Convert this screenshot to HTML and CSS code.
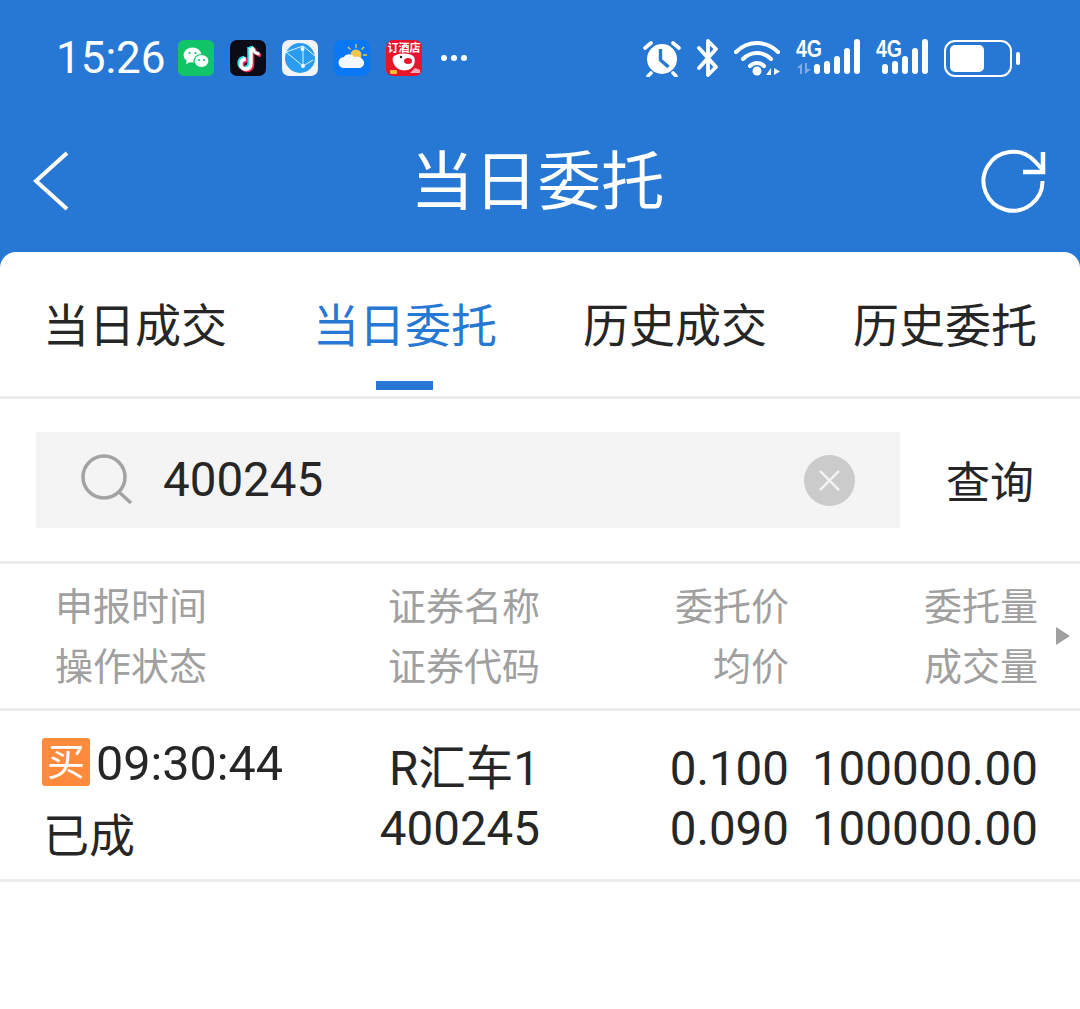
FILE: index.html
```html
<!DOCTYPE html>
<html lang="zh-CN">
<head>
    <meta charset="UTF-8" />
    <meta name="viewport" content="width=device-width, initial-scale=1.0"/>
    <title>当日委托</title>
    <link rel="stylesheet" href="styles.css">
</head>
<body>

    <header class="topbar">
        <div class="statusbar">
            <div class="status-left">
                <span class="clock">15:26</span>
                <div class="app-icons">
                    <svg class="app-icon" viewBox="0 0 36 36">
                        <rect width="36" height="36" rx="6" fill="#12c468"/>
                        <ellipse cx="14.5" cy="15" rx="9" ry="7.5" fill="#fff"/>
                        <path d="M9 20l-1 4 4.500-2z" fill="#fff"/>
                        <ellipse cx="23.500" cy="21" rx="7.500" ry="6.500" fill="#fff" stroke="#12c468" stroke-width="1.200"/>
                        <circle cx="11.500" cy="13" r="1.100" fill="#12c468"/>
                        <circle cx="17.500" cy="13" r="1.100" fill="#12c468"/>
                        <circle cx="21" cy="20" r="1" fill="#12c468"/>
                        <circle cx="26" cy="20" r="1" fill="#12c468"/>
                    </svg>
                    <svg class="app-icon" viewBox="0 0 36 36">
                        <rect width="36" height="36" rx="7" fill="#0b0c17"/>
                        <path d="M19.500 7v16a5 5 0 1 1-5-5" fill="none" stroke="#27e0e6" stroke-width="4.500"/>
                        <path d="M21 6c.5 4 3.500 7 8 7.500" fill="none" stroke="#27e0e6" stroke-width="3.500"/>
                        <path d="M22 9v16a5 5 0 1 1-5-5" fill="none" stroke="#f5295a" stroke-width="4.500"/>
                        <path d="M24 8c.5 4 3 6.500 7 7.500" fill="none" stroke="#f5295a" stroke-width="3.500"/>
                        <path d="M20.800 8v16a5 5 0 1 1-5-5" fill="none" stroke="#fff" stroke-width="3.800"/>
                        <path d="M22.500 7c.5 4 3 6.500 7 7" fill="none" stroke="#fff" stroke-width="3"/>
                    </svg>
                    <svg class="app-icon" viewBox="0 0 36 36">
                        <rect width="36" height="36" rx="7" fill="#f2f4f7"/>
                        <circle cx="18" cy="18" r="15" fill="#2a9df0"/>
                        <path d="M4 12L21 6M4 12l17 14M21 6l0 20M21 6l12 10M21 26l10-6" stroke="#dff1ff" stroke-width="1" fill="none"/>
                        <circle cx="20.500" cy="9" r="2" fill="#fff"/>
                        <circle cx="21" cy="26" r="2" fill="#fff"/>
                    </svg>
                    <svg class="app-icon" viewBox="0 0 36 36">
                        <rect width="36" height="36" rx="7" fill="#0a78f5"/>
                        <circle cx="22" cy="15" r="5.500" fill="#f4c64a"/>
                        <path d="M22 4v4M30 7l-2.500 2.500M33 15h-4M14 7l2.500 2.500" stroke="#f4c64a" stroke-width="1.300"/>
                        <path d="M10 28a5.500 5.500 0 0 1 0-11c1.500-3.500 8-4 10 0 5-1 9 1 10 5 .5 3.500-2 6-5 6z" fill="#f4f8fd"/>
                    </svg>
                    <svg class="app-icon" viewBox="0 0 36 36">
                        <rect width="36" height="36" rx="7" fill="#e8142c"/>
                        <text class="app-icon-text" x="18" y="12" text-anchor="middle">订酒店</text>
                        <path d="M7 17c3-4 17-5 21 0 2 4 0 10-4 12-6 3-12 1-15-3-2-3-3-6-2-9z" fill="#fff"/>
                        <ellipse cx="22" cy="21" rx="4" ry="3" fill="#e8142c"/>
                        <circle cx="15" cy="17" r="1.200" fill="#222"/>
                        <rect x="4" y="30" width="7" height="4" rx="1" fill="#f6c330"/>
                        <path d="M24 33l5-5 5 2v3z" fill="#f7a8c0"/>
                    </svg>
                </div>
                <div class="more-dots"><i></i><i></i><i></i></div>
            </div>
            <div class="status-right">
                <svg class="st-alarm" viewBox="0 0 38 38">
                    <circle cx="19" cy="20" r="15" fill="#fff"/>
                    <path d="M17.500 10v11l8 7" fill="none" stroke="#2778d5" stroke-width="3.400"/>
                    <path d="M2 9l6-5M30 4l6 5M8 34l-3 3M30 34l3 3" stroke="#fff" stroke-width="3.600" stroke-linecap="round" fill="none"/>
                </svg>
                <svg class="st-bt" viewBox="0 0 24 38">
                    <path d="M3 9l17 19-8 8V2l8 8L3 29" fill="none" stroke="#fff" stroke-width="3.800" stroke-linejoin="round" stroke-linecap="round"/>
                </svg>
                <svg class="st-wifi" viewBox="0 0 48 38">
                    <path d="M2 13c12-12 30-12 42 0M9 20c8-8 20-8 28 0M16 27c4-4 10-4 14 0" fill="none" stroke="#fff" stroke-width="4" stroke-linecap="round"/>
                    <circle cx="23" cy="32" r="4.500" fill="#fff"/>
                    <path d="M37 29v7h-5zM40 29v7l6-3.500z" fill="#fff"/>
                </svg>
                <div class="signal signal-first">
                    <span class="signal-type">4G</span>
                    <svg class="signal-arrows" viewBox="0 0 16 11">
                        <path d="M6 11V0L1 5h3v6zM9 0v11l6-5h-4V0z" fill="#fff"/>
                    </svg>
                    <div class="bars"><i class="b1"></i><i class="b2"></i><i class="b3"></i><i class="b4"></i><i class="b5"></i></div>
                </div>
                <div class="signal">
                    <span class="signal-type">4G</span>
                    <div class="bars"><i class="b1"></i><i class="b2"></i><i class="b3"></i><i class="b4"></i><i class="b5"></i></div>
                </div>
                <div class="battery">
                    <div class="battery-body"><div class="battery-level"></div></div>
                    <div class="battery-cap"></div>
                </div>
            </div>
        </div>
        <div class="navbar">
            <svg class="nav-icon nav-back" viewBox="0 0 66 66">
                <path d="M39 3L8 31l31 28" fill="none" stroke="#fff" stroke-width="4"/>
            </svg>
            <h1 class="nav-title">当日委托</h1>
            <svg class="nav-icon" viewBox="0 0 66 66">
                <path d="M61.500 33A29.500 29.500 0 1 1 53 12.500L61 21" fill="none" stroke="#fff" stroke-width="4"/>
                <path d="M62 4v20H42" fill="none" stroke="#fff" stroke-width="4.500"/>
            </svg>
        </div>
    </header>

    <main class="sheet">
        <nav class="tabs">
            <a class="tab">当日成交</a>
            <a class="tab active">当日委托</a>
            <a class="tab">历史成交</a>
            <a class="tab">历史委托</a>
        </nav>

        <div class="search-row">
            <div class="search-box">
                <svg class="search-icon" viewBox="0 0 52 52">
                    <circle cx="23" cy="23" r="21" fill="none" stroke="#a3a3a3" stroke-width="3.500"/>
                    <path d="M38 38l12 11" stroke="#a3a3a3" stroke-width="3.500"/>
                </svg>
                <span class="search-value">400245</span>
                <span class="clear-btn">
                    <svg viewBox="0 0 24 24"><path d="M2 2l20 20M22 2L2 22" stroke="#f4f4f4" stroke-width="2.400"/></svg>
                </span>
            </div>
            <span class="search-btn">查询</span>
        </div>

        <div class="list-head">
            <div class="col col-time"><div>申报时间</div><div>操作状态</div></div>
            <div class="col col-name"><div>证券名称</div><div>证券代码</div></div>
            <div class="col col-price"><div>委托价</div><div>均价</div></div>
            <div class="col col-qty"><div>委托量</div><div>成交量</div></div>
            <div class="col-more"><span class="arrow"></span></div>
        </div>

        <div class="list-row">
            <div class="col col-time">
                <div class="time-line"><span class="buy-tag">买</span><span class="time-text">09:30:44</span></div>
                <div class="state-line">已成</div>
            </div>
            <div class="col col-name"><div>R汇车1</div><div>400245</div></div>
            <div class="col col-price"><div>0.100</div><div>0.090</div></div>
            <div class="col col-qty"><div>100000.00</div><div>100000.00</div></div>
            <div class="col-more"></div>
        </div>
    </main>

</body>
</html>
```

FILE: styles.css
```css
body {
    font-family: Roboto, "Noto Sans CJK SC", sans-serif;
    margin: 0;
    padding: 0;
    background-color: #2778d5;
    color: #262626;
    height: 1009px;
    overflow: hidden;
}
.topbar {
    height: 252px;
    color: #fff;
}
.statusbar {
    height: 118px;
    display: flex;
    justify-content: space-between;
    align-items: flex-start;
    padding: 36px 60px 0 56px;
    box-sizing: border-box;
}
.status-left, .status-right {
    display: flex;
    align-items: center;
    height: 44px;
}
.clock {
    font-size: 44px;
    line-height: 46px;
    width: 122px;
}
.app-icons {
    display: flex;
    gap: 16px;
}
.app-icon {
    width: 36px;
    height: 36px;
    display: block;
}
.app-icon-text {
    font-size: 11px;
    font-weight: 700;
    fill: #fff;
}
.more-dots {
    display: flex;
    gap: 4px;
    margin-left: 19px;
}
.more-dots i {
    width: 6px;
    height: 6px;
    border-radius: 50%;
    background: #fff;
}
.st-alarm {
    width: 38px;
    height: 38px;
}
.st-bt {
    width: 24px;
    height: 38px;
    margin-left: 15px;
}
.st-wifi {
    width: 48px;
    height: 38px;
    margin-left: 14px;
}
.signal {
    position: relative;
    width: 54px;
    height: 38px;
    margin-left: 14px;
}
.signal-first {
    width: 66px;
    margin-left: 13px;
}
.signal-type {
    position: absolute;
    left: 1px;
    top: -1px;
    font-family: "Liberation Sans", sans-serif;
    font-size: 23px;
    line-height: 23px;
    font-weight: 700;
    transform: scaleX(0.85);
    transform-origin: left top;
}
.signal-arrows {
    position: absolute;
    left: 1px;
    top: 24px;
    width: 16px;
    height: 11px;
    opacity: 0.4;
}
.bars {
    position: absolute;
    right: 1px;
    bottom: 3px;
    display: flex;
    align-items: flex-end;
    gap: 4px;
}
.bars i {
    width: 6px;
    border-radius: 3px;
    background: #fff;
}
.b1 { height: 10px; }
.b2 { height: 13px; }
.b3 { height: 18px; }
.b4 { height: 26px; }
.b5 { height: 35px; }
.battery {
    display: flex;
    align-items: center;
    margin-left: 15px;
}
.battery-body {
    width: 68px;
    height: 37px;
    border: 2px solid #fff;
    border-radius: 11px;
    box-sizing: border-box;
    padding: 3px 4px;
}
.battery-level {
    width: 34px;
    height: 100%;
    background: #fff;
    border-radius: 5px;
}
.battery-cap {
    width: 4px;
    height: 13px;
    margin-left: 4px;
    background: #fff;
    border-radius: 2px;
}
.navbar {
    height: 134px;
    display: flex;
    justify-content: space-between;
    align-items: flex-start;
    padding: 0 33px;
}
.nav-icon {
    width: 66px;
    height: 66px;
    margin-top: 30px;
}
.nav-back {
    margin: 32px 0 0 -5px;
}
.nav-title {
    margin: 18px 0 0;
    font-size: 63.500px;
    line-height: 94px;
    font-weight: 400;
}
.sheet {
    height: 757px;
    background-color: #fff;
    border-radius: 16px 16px 0 0;
}
.tabs {
    display: grid;
    grid-template-columns: repeat(4, 1fr);
    height: 144px;
    border-bottom: 3px solid #ececec;
}
.tab {
    position: relative;
    text-align: center;
    font-size: 46px;
    line-height: 148px;
}
.tab.active {
    color: #2778d5;
}
.tab.active::after {
    content: "";
    position: absolute;
    left: 106px;
    bottom: 10px;
    width: 57px;
    height: 9px;
    background-color: #2778d5;
}
.search-row {
    display: flex;
    align-items: center;
    height: 162px;
    padding: 0 46px 0 36px;
    border-bottom: 3px solid #ececec;
}
.search-box {
    display: flex;
    align-items: center;
    width: 864px;
    height: 96px;
    background-color: #f4f4f4;
    box-sizing: border-box;
    padding: 0 45px;
}
.search-icon {
    width: 52px;
    height: 52px;
    flex: none;
}
.search-value {
    margin-left: 30px;
    font-size: 47.500px;
    line-height: 98px;
    flex: 1;
}
.clear-btn {
    display: flex;
    align-items: center;
    justify-content: center;
    width: 51px;
    height: 51px;
    border-radius: 50%;
    background-color: #cbcbcb;
}
.clear-btn svg {
    width: 23px;
    height: 23px;
}
.search-btn {
    margin-left: auto;
    font-size: 44px;
}
.list-head, .list-row {
    display: flex;
    border-bottom: 3px solid #ececec;
}
.list-head {
    height: 131px;
    padding-top: 13px;
    font-size: 38px;
    line-height: 60px;
    color: #a0a0a0;
}
.list-row {
    height: 140px;
    padding-top: 28px;
    font-size: 47.500px;
    line-height: 60px;
}
.col {
    text-align: right;
}
.col-time {
    width: 270px;
    text-align: left;
}
.col-name {
    width: 270px;
}
.col-price, .col-qty {
    width: 249px;
}
.col-more {
    flex: 1;
    display: flex;
    align-items: center;
    justify-content: center;
    padding-left: 8px;
    height: 118px;
}
.arrow {
    border-left: 14px solid #a0a0a0;
    border-top: 9px solid transparent;
    border-bottom: 9px solid transparent;
}
.list-head .col-time {
    width: 262px;
    padding-left: 8px;
    text-indent: 47px;
}
.list-row .col-time {
    margin-top: -1px;
    padding-left: 42px;
    width: 228px;
}
.time-line {
    display: flex;
    align-items: center;
    gap: 6px;
    height: 48px;
    font-size: 48.500px;
}
.time-text {
    padding-top: 4px;
}
.buy-tag {
    flex: none;
    width: 48px;
    height: 48px;
    line-height: 48px;
    text-align: center;
    font-size: 38px;
    color: #fff;
    background-color: #ff8a3c;
    border-radius: 3px;
}
.state-line {
    margin: 20px 0 0 1px;
    font-size: 46px;
    line-height: 60px;
}
```
